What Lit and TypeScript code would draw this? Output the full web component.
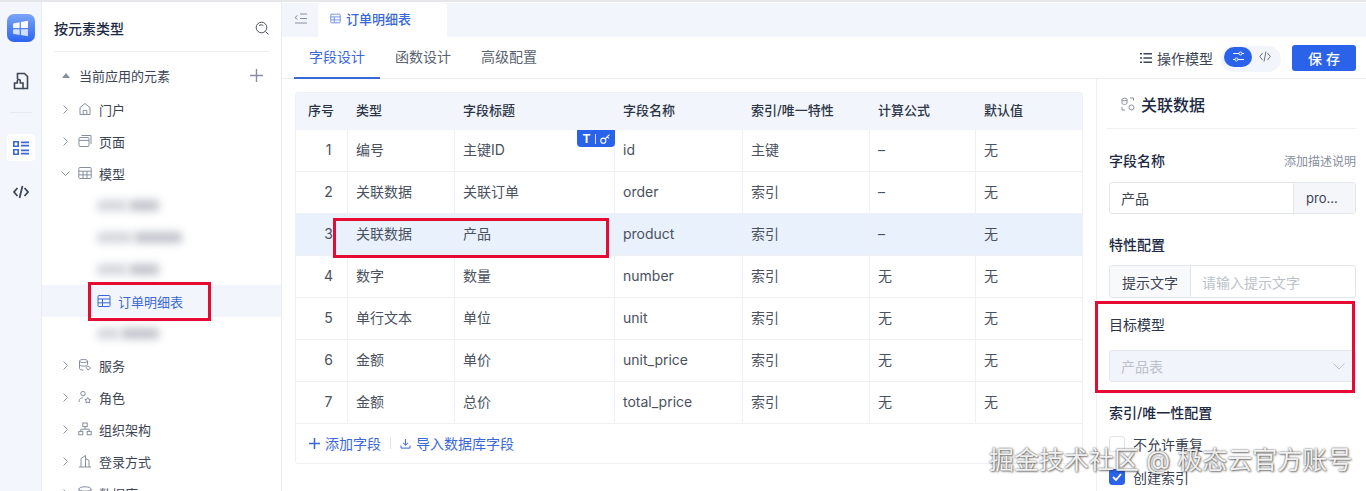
import { LitElement, css, html } from 'lit';
import { customElement } from 'lit/decorators.js';

const stroke = (w = 1) => `fill:none;stroke:currentColor;stroke-width:${w}`;

const icons = {
  home: html`<svg viewBox="0 0 14 14" style=${stroke()}><path d="M2 5.6 7 1.5l5 4.1v6.9H2z"/><path d="M5.2 12.5V8.4h3.6v4.1"/></svg>`,
  page: html`<svg viewBox="0 0 14 14" style=${stroke()}><rect x="1" y="3.5" width="10" height="9" rx="1"/><path d="M1 6.4h10M3.5 1.5H13v8.5"/></svg>`,
  grid: html`<svg viewBox="0 0 14 14" style=${stroke()}><rect x=".8" y="1.5" width="12.4" height="11" rx="1"/><path d="M.8 5.2h12.4M.8 8.9h12.4M5 5.2v7.3M9 5.2v7.3"/></svg>`,
  sheet: html`<svg viewBox="0 0 14 14" style=${stroke()}><rect x="1" y="1.5" width="12" height="11" rx="1"/><path d="M1 5h12M1 8.8h12M5.5 5v7.5"/></svg>`,
  service: html`<svg viewBox="0 0 14 14" style=${stroke()}><ellipse cx="5.5" cy="3" rx="4" ry="1.6"/><path d="M1.5 3v7.5c0 1 1.8 1.6 4 1.6M1.5 6.5c0 1 1.8 1.6 4 1.6s4-.6 4-1.6V3"/><path d="m8 9.5 2-1.6 2.6 2.1-2.6 2.1z"/></svg>`,
  role: html`<svg viewBox="0 0 14 14" style=${stroke()}><circle cx="5" cy="3.6" r="2.2"/><path d="M1.2 12v-1.4C1.2 8.8 3 7.8 5 7.8"/><path d="m9.8 7.5.9 1.8 2 .3-1.4 1.4.3 2-1.8-.9-1.8.9.3-2-1.4-1.4 2-.3z"/></svg>`,
  org: html`<svg viewBox="0 0 14 14" style=${stroke()}><rect x="4.8" y="1" width="4.4" height="3.6"/><rect x=".8" y="9.4" width="4" height="3.4"/><rect x="9.2" y="9.4" width="4" height="3.4"/><path d="M7 4.6v2.6M2.8 9.4V7.2h8.4v2.2"/></svg>`,
  login: html`<svg viewBox="0 0 14 14" style=${stroke()}><path d="M3 13V4.5l4.5-3V13M7.5 4.5l3.5 2V13M.8 13h12.4"/></svg>`,
  db: html`<svg viewBox="0 0 14 14" style=${stroke()}><ellipse cx="7" cy="3" rx="6" ry="2.2"/><path d="M1 3v9c0 1.2 2.7 2.2 6 2.2s6-1 6-2.2V3"/></svg>`,
};

const treeAfter = [
  { label: '服务', icon: icons.service },
  { label: '角色', icon: icons.role },
  { label: '组织架构', icon: icons.org },
  { label: '登录方式', icon: icons.login },
  { label: '数据库', icon: icons.db },
];

const fields = [
  ['1', '编号', '主键ID', 'id', '主键', '–', '无'],
  ['2', '关联数据', '关联订单', 'order', '索引', '–', '无'],
  ['3', '关联数据', '产品', 'product', '索引', '–', '无'],
  ['4', '数字', '数量', 'number', '索引', '无', '无'],
  ['5', '单行文本', '单位', 'unit', '索引', '无', '无'],
  ['6', '金额', '单价', 'unit_price', '索引', '无', '无'],
  ['7', '金额', '总价', 'total_price', '索引', '无', '无'],
];

const headers = ['序号', '类型', '字段标题', '字段名称', '索引/唯一特性', '计算公式', '默认值'];

@customElement('app-root')
export class AppRoot extends LitElement {
  static styles = css`
    :host {
      display: block;
      position: relative;
      width: 1366px;
      height: 491px;
      overflow: hidden;
      background: #fff;
      color: #4a5160;
      font-family: Inter, 'Noto Sans CJK SC', sans-serif;
      font-size: 14px;
      border-top: 2px solid #e6e7ea;
      box-sizing: border-box;
    }
    svg { display: block; }
    .app { display: flex; height: 489px; }

    .rail {
      width: 41px;
      flex: none;
      background: #f3f6fc;
      border-right: 1px solid #e9ecf3;
      display: flex;
      flex-direction: column;
      align-items: center;
      padding-top: 12px;
      box-sizing: content-box;
    }
    .logo {
      width: 28px;
      height: 28px;
      border-radius: 7px;
      background: linear-gradient(180deg, #7ba4f8, #2c64f0);
      display: flex;
      align-items: center;
      justify-content: center;
    }
    .logo svg { width: 17px; height: 17px; }
    .rail-btn { width: 16px; height: 18px; margin-top: 30px; color: #3d4657; }
    .rail-sep { width: 22px; height: 1px; background: #e6e9f0; margin-top: 22px; }
    .rail-active {
      width: 28px;
      height: 27px;
      margin-top: 21px;
      border-radius: 4px;
      background: #fff;
      color: #3a68d8;
      display: flex;
      align-items: center;
      justify-content: center;
    }
    .rail-active svg { width: 16px; height: 14px; }
    .rail-code { width: 16px; height: 14px; margin-top: 24px; color: #3d4657; }

    .side {
      width: 239px;
      flex: none;
      border-right: 1px solid #e9ecf3;
    }
    .side-head {
      margin: 0 12px;
      height: 50px;
      padding-top: 2px;
      box-sizing: border-box;
      border-bottom: 1px solid #eceef2;
      display: flex;
      align-items: center;
      justify-content: space-between;
      font-weight: 500;
      color: #1d2a44;
    }
    .side-head svg { width: 14px; height: 14px; color: #4a5160; }
    .section {
      height: 35px;
      margin-top: 6px;
      padding-bottom: 1px;
      box-sizing: border-box;
      display: flex;
      align-items: center;
      padding-left: 20px;
      padding-right: 18px;
      font-size: 13px;
      color: #3c4454;
    }
    .tri {
      width: 0;
      height: 0;
      border: 4px solid transparent;
      border-top: 0;
      border-bottom: 5px solid #868ea0;
      margin-right: 9px;
    }
    .plus { margin-left: auto; width: 13px; height: 13px; color: #868ea0; }
    .row {
      height: 32px;
      display: flex;
      align-items: center;
      font-size: 13px;
      color: #3c4454;
      padding-left: 21px;
    }
    .chev { width: 5px; height: 9px; color: #8a90a0; margin-right: 10px; }
    .chev.open { width: 9px; height: 5px; margin: 0 8px 0 -2px; }
    .ico { width: 14px; height: 14px; color: #868ea0; margin-right: 7px; }
    .row.sub { padding-left: 55px; }
    .row.sel { background: #f2f5fb; color: #3a68d8; }
    .row.sel .ico { color: #3a68d8; margin-right: 7px; }
    .blob {
      height: 11px;
      background: #d3d6dc;
      border-radius: 3px;
      filter: blur(4px);
    }
    .blob.dark { background: #c0c3cb; margin-left: 2px; }

    .main { flex: 1; min-width: 0; display: flex; flex-direction: column; }
    .tabbar { height: 34px; flex: none; background: #f2f5fb; display: flex; margin-top: 1px; }
    .collapse {
      width: 36px;
      display: flex;
      align-items: center;
      justify-content: center;
      color: #868ea0;
      padding-bottom: 4px;
      box-sizing: border-box;
    }
    .collapse svg { width: 13px; height: 11px; }
    .doc-tab {
      width: 129px;
      background: #fff;
      border-radius: 4px 4px 0 0;
      display: flex;
      align-items: center;
      padding: 0 0 3px 12px;
      box-sizing: border-box;
      font-size: 13px;
      font-weight: 500;
      color: #3a68d8;
      gap: 5px;
    }
    .doc-tab svg { width: 11px; height: 11px; color: #6d8fe0; }

    .toolbar {
      height: 42px;
      flex: none;
      border-bottom: 1px solid #e9ecf3;
      display: flex;
      align-items: stretch;
      padding: 0 10px 0 12px;
      box-sizing: border-box;
    }
    .sub-tab {
      width: 86px;
      display: flex;
      align-items: center;
      justify-content: center;
      border-bottom: 2px solid transparent;
      color: #5a6170;
      padding-bottom: 2px;
      box-sizing: border-box;
      margin-bottom: -1px;
    }
    .sub-tab.on { color: #3a68d8; border-bottom-color: #3a68d8; }
    .tools { margin-left: auto; display: flex; align-items: center; color: #3c4454; }
    .tools .list { width: 12px; height: 10px; margin-right: 5px; }
    .switch {
      width: 60px;
      height: 26px;
      margin: 2px 11px 0 8px;
      border-radius: 13px;
      background: #f2f5fb;
      display: flex;
      align-items: center;
      padding: 0 3px;
      box-sizing: border-box;
      color: #6a7180;
    }
    .switch .on {
      width: 28px;
      height: 20px;
      border-radius: 10px;
      background: #2b62ea;
      color: #fff;
      display: flex;
      align-items: center;
      justify-content: center;
      margin-top: -4px;
    }
    .switch .on svg { width: 11px; height: 11px; }
    .switch .off { width: 12px; height: 11px; margin: -4px 0 0 7px; }
    .save {
      width: 64px;
      height: 26px;
      border-radius: 3px;
      background: #2b62ea;
      color: #fff;
      display: flex;
      align-items: center;
      justify-content: center;
      letter-spacing: 4px;
      font-size: 14px;
      font-weight: 500;
      padding-left: 4px;
      box-sizing: border-box;
    }

    .body { flex: 1; display: flex; min-height: 0; }
    .design { flex: 1; padding: 13px 13px 0 13px; min-width: 0; }
    .table {
      width: 788px;
      border: 1px solid #eef0f4;
      border-radius: 3px;
      box-sizing: border-box;
      height: 372px;
    }
    .tr { display: grid; grid-template-columns: 52px 107px 160px 128px 127px 106px 1fr; height: 42px; border-bottom: 1px solid #eef0f4; box-sizing: border-box; }
    .tr.head { height: 37px; background: #f2f5fb; border-bottom: 0; color: #2c3548; font-size: 13px; font-weight: 500; }
    .tr.hi { background: #e9f1fc; }
    .cell {
      display: flex;
      align-items: center;
      padding: 0 8px 3px;
      position: relative;
      font-size: 14px;
      border-right: 1px solid #eef0f4;
      box-sizing: border-box;
    }
    .head .cell { font-size: 13px; border-right: 0; padding-bottom: 4px; }
    .cell.num { justify-content: center; padding-left: 22px; }
    .cell:last-child { border-right: 0; }
    .badge {
      position: absolute;
      top: 0;
      right: -1px;
      width: 38px;
      height: 17px;
      border-radius: 0 0 4px 4px;
      background: #2b62ea;
      color: #fff;
      display: flex;
      align-items: center;
      justify-content: center;
      gap: 4px;
      font-size: 12px;
      font-weight: 700;
    }
    .badge i { width: 1px; height: 10px; background: #d6e1fb; }
    .badge svg { width: 10px; height: 10px; }
    .foot {
      height: 40px;
      display: flex;
      align-items: center;
      padding: 0 0 2px 13px;
      box-sizing: border-box;
      color: #3a68d8;
      font-size: 14px;
    }
    .foot .add { width: 11px; height: 11px; margin-right: 5px; }
    .foot .dl { width: 11px; height: 11px; margin-right: 5px; }
    .foot i { width: 1px; height: 12px; background: #dfe2e8; margin: 0 9px; }

    .panel {
      width: 270px;
      flex: none;
      border-left: 1px solid #eef0f4;
      padding: 0 10px 0 12px;
      box-sizing: border-box;
      color: #1d2a44;
    }
    .panel-title {
      height: 50px;
      box-sizing: border-box;
      border-bottom: 1px solid #eef0f4;
      display: flex;
      align-items: center;
      padding-left: 14px;
      gap: 6px;
      font-size: 16px;
      font-weight: 500;
      margin-left: -2px;
    }
    .panel-title svg { width: 14px; height: 14px; color: #868ea0; }
    .label {
      height: 20px;
      display: flex;
      align-items: center;
      justify-content: space-between;
      font-size: 14px;
      font-weight: 500;
    }
    .label small { font-size: 12px; font-weight: 400; color: #868ea0; }
    .label.plain { font-weight: 400; color: #2c3548; }
    .input {
      display: flex;
      height: 32px;
      border: 1px solid #e3e6ec;
      border-radius: 3px;
      box-sizing: border-box;
      overflow: hidden;
      font-size: 14px;
      color: #3c4454;
    }
    .input > div { display: flex; align-items: center; padding: 0 11px; }
    .input .grow { flex: 1; min-width: 0; }
    .input .addon { background: #f5f6f9; border-left: 1px solid #e3e6ec; width: 62px; padding: 0 0 0 12px; box-sizing: border-box; font-size: 13px; }
    .input .pre { background: #f8f9fb; border-right: 1px solid #e3e6ec; width: 81px; padding: 0; justify-content: center; box-sizing: border-box; }
    .input .ph { color: #bcc1cc; font-size: 14px; }
    .select {
      height: 32px;
      border: 1px solid #e3e6ec;
      border-radius: 3px;
      background: #f1f4fa;
      display: flex;
      align-items: center;
      justify-content: space-between;
      padding: 0 10px 0 11px;
      box-sizing: border-box;
      color: #bcc1cc;
    }
    .select svg { width: 12px; height: 7px; }
    .check { display: flex; align-items: center; height: 16px; font-size: 14px; color: #3c4454; gap: 8px; }
    .box { width: 16px; height: 16px; border: 1px solid #dfe2e8; border-radius: 3px; box-sizing: border-box; display: flex; align-items: center; justify-content: center; }
    .box.on { background: #2b62ea; border-color: #2b62ea; }
    .box svg { width: 10px; height: 8px; }

    .mark {
      position: absolute;
      border: 3px solid #e60b33;
      box-sizing: border-box;
      pointer-events: none;
    }
    .watermark {
      position: absolute;
      left: 989px;
      top: 442px;
      font-size: 25px;
      line-height: 32px;
      white-space: nowrap;
      color: rgba(255, 255, 255, 0.92);
      text-shadow: 0 0 2px rgba(40, 40, 40, 0.85), 1px 1px 2px rgba(40, 40, 40, 0.5);
      pointer-events: none;
    }
  `;

  private _chev(open = false) {
    return open
      ? html`<svg class="chev open" viewBox="0 0 9 5" style=${stroke()}><path d="m.5.5 4 4 4-4"/></svg>`
      : html`<svg class="chev" viewBox="0 0 5 9" style=${stroke()}><path d="m.5.5 4 4-4 4"/></svg>`;
  }

  private _row(label: string, icon: unknown, open = false) {
    return html`<div class="row">${this._chev(open)}<span class="ico">${icon}</span><span>${label}</span></div>`;
  }

  private _blur(a: number, b: number) {
    return html`<div class="row sub">
      <div class="blob" style="width:${a}px"></div>
      <div class="blob dark" style="width:${b}px"></div>
    </div>`;
  }

  private _rail() {
    return html`<nav class="rail">
      <div class="logo">
        <svg viewBox="0 0 16 16" fill="#fff">
          <path d="M1 3.2 7.2 2v5.6H1z" opacity=".95"/>
          <path d="M8.400 1.800 15 .8v6.800H8.400z"/>
          <path d="M1 8.800h6.200v5.400L1 13z" opacity=".75"/>
          <path d="M8.400 8.800H15v6.400l-6.600-1z" opacity=".75"/>
        </svg>
      </div>
      <svg class="rail-btn" style=${stroke(1.6)} viewBox="0 0 16 18">
        <path d="M4.500 7V1.500h7l3 3v12H10"/>
        <path d="M1.500 11h2.800V9a1.500 1.500 0 0 1 3 0v2H10v5.500H1.500z"/>
      </svg>
      <div class="rail-sep"></div>
      <div class="rail-active">
        <svg viewBox="0 0 16 14" fill="currentColor">
          <path fill-rule="evenodd" d="M0 0h6v6H0zM1.600 1.600v2.800h2.800V1.600zM0 8h6v6H0zM1.600 9.600v2.800h2.800V9.600z"/>
          <path d="M8 .6h8v1.600H8zM8 3.800h8v1.600H8zM8 8.600h8v1.600H8zM8 11.800h8v1.600H8z"/>
        </svg>
      </div>
      <svg class="rail-code" style=${stroke(1.8)} viewBox="0 0 16 14">
        <path d="M4.500 3 1 7l3.500 4M11.500 3 15 7l-3.500 4M9.500 1 6.500 13"/>
      </svg>
    </nav>`;
  }

  private _side() {
    return html`<aside class="side">
      <div class="side-head">
        <span>按元素类型</span>
        <svg viewBox="0 0 14 14" style=${stroke()}><circle cx="6.500" cy="6.500" r="5.300"/><path d="m10.500 10.500 3 3M4 4.600c1.200-1 3-1 4.400 0"/></svg>
      </div>
      <div class="section">
        <span class="tri"></span>
        <span>当前应用的元素</span>
        <svg class="plus" viewBox="0 0 13 13" style=${stroke(1.4)}><path d="M6.500 0v13M0 6.500h13"/></svg>
      </div>
      ${this._row('门户', icons.home)}
      ${this._row('页面', icons.page)}
      ${this._row('模型', icons.grid, true)}
      ${this._blur(30, 30)}
      ${this._blur(35, 48)}
      ${this._blur(30, 30)}
      <div class="row sub sel"><span class="ico">${icons.sheet}</span><span>订单明细表</span></div>
      ${this._blur(22, 38)}
      ${treeAfter.map((t) => this._row(t.label, t.icon))}
    </aside>`;
  }

  private _toolbar() {
    return html`<div class="toolbar">
      <div class="sub-tab on">字段设计</div>
      <div class="sub-tab">函数设计</div>
      <div class="sub-tab">高级配置</div>
      <div class="tools">
        <svg class="list" viewBox="0 0 12 10" fill="currentColor"><path d="M0 0h2v1.500H0zM3.500 0H12v1.500H3.500zM0 4.200h2v1.500H0zM3.500 4.200H12v1.500H3.500zM0 8.500h2V10H0zM3.500 8.500H12V10H3.500z"/></svg>
        <span>操作模型</span>
        <div class="switch">
          <div class="on">
            <svg viewBox="0 0 11 11" style=${stroke()}><path d="M0 2.500h6M9 2.500h2M0 8.500h2M5 8.500h6"/><circle cx="7.500" cy="2.500" r="1.500"/><circle cx="3.500" cy="8.500" r="1.500"/></svg>
          </div>
          <svg class="off" viewBox="0 0 12 11" style=${stroke()}><path d="M3.500 2 .8 5.500 3.500 9M8.500 2l2.700 3.500L8.500 9M7 .5 5 10.500"/></svg>
        </div>
        <div class="save">保存</div>
      </div>
    </div>`;
  }

  private _table() {
    return html`<div class="table">
      <div class="tr head">${headers.map((h, i) => html`<div class="cell" style=${i === 0 ? 'padding-left:12px' : ''}>${h}</div>`)}</div>
      ${fields.map((f, r) => html`<div class="tr ${r === 2 ? 'hi' : ''}">
        ${f.map((v, c) => html`<div class="cell ${c === 0 ? 'num' : ''}">
          ${v}
          ${r === 0 && c === 2
            ? html`<div class="badge">T<i></i>
                <svg viewBox="0 0 9 9" style=${stroke()}><circle cx="3" cy="6" r="2.300"/><path d="m4.800 4.200 3.700-3.700M6.500 2.500l1.500 1.500"/></svg>
              </div>`
            : ''}
        </div>`)}
      </div>`)}
      <div class="foot">
        <svg class="add" viewBox="0 0 11 11" style=${stroke(1.5)}><path d="M5.500 0v11M0 5.500h11"/></svg>
        <span>添加字段</span>
        <i></i>
        <svg class="dl" viewBox="0 0 11 11" style=${stroke()}><path d="M5.500 1v6M3 4.800l2.500 2.400L8 4.800M1 7.500v2.600h9V7.500"/></svg>
        <span>导入数据库字段</span>
      </div>
    </div>`;
  }

  private _panel() {
    return html`<section class="panel">
      <div class="panel-title">
        <svg viewBox="0 0 14 14" style=${stroke()}>
          <ellipse cx="3.500" cy="2.500" rx="2.500" ry="1.300"/><path d="M1 2.500v3.600c0 .7 1.100 1.300 2.500 1.300S6 6.800 6 6.100V2.500"/>
          <circle cx="10.500" cy="10.500" r="2.500"/><path d="M9 1h3.500v2.500M1 10v3h3"/>
        </svg>
        <span>关联数据</span>
      </div>
      <div class="label" style="margin-top:21px"><span>字段名称</span><small>添加描述说明</small></div>
      <div class="input" style="margin-top:12px">
        <div class="grow">产品</div>
        <div class="addon">pro...</div>
      </div>
      <div class="label" style="margin-top:20px"><span>特性配置</span></div>
      <div class="input" style="margin-top:11px;height:33px">
        <div class="pre">提示文字</div>
        <div class="grow ph">请输入提示文字</div>
      </div>
      <div class="label plain" style="margin-top:16px"><span>目标模型</span></div>
      <div class="select" style="margin-top:16px">
        <span>产品表</span>
        <svg viewBox="0 0 12 7" style=${stroke()}><path d="m.5.5 5.500 5.500 5.500-5.500"/></svg>
      </div>
      <div class="label" style="margin-top:20px"><span>索引/唯一性配置</span></div>
      <div class="check" style="margin-top:14px"><span class="box"></span>不允许重复</div>
      <div class="check" style="margin-top:17px">
        <span class="box on"><svg viewBox="0 0 10 8" style="fill:none;stroke:#fff;stroke-width:1.800"><path d="m1 4 3 3 5-6"/></svg></span>
        创建索引
      </div>
    </section>`;
  }

  render() {
    return html`
      <div class="app">
        ${this._rail()}
        ${this._side()}
        <main class="main">
          <div class="tabbar">
            <div class="collapse">
              <svg viewBox="0 0 13 11" style=${stroke()}><path d="M6 1h7M6 5.500h7M1 10h12M3.500 2.500 1 4.500l2.500 2"/></svg>
            </div>
            <div class="doc-tab">
              <svg viewBox="0 0 14 14" style=${stroke(1.2)}><rect x="1" y="1.500" width="12" height="11" rx="1"/><path d="M1 5h12M1 8.800h12M5.500 5v7.500"/></svg>
              订单明细表
            </div>
          </div>
          ${this._toolbar()}
          <div class="body">
            <div class="design">${this._table()}</div>
            ${this._panel()}
          </div>
        </main>
      </div>
      <div class="mark" style="left:88px;top:280px;width:123px;height:39px"></div>
      <div class="mark" style="left:333px;top:216px;width:276px;height:40px"></div>
      <div class="mark" style="left:1095px;top:299px;width:260px;height:92px"></div>
      <div class="watermark">掘金技术社区 @ 极态云官方账号</div>
    `;
  }
}
